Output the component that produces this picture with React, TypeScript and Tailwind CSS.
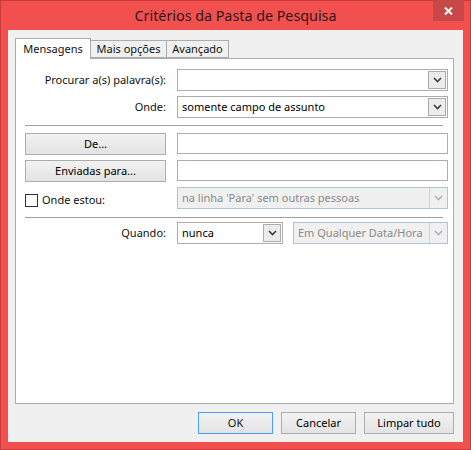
import React from "react";

const font = { fontFamily: '"Noto Sans", "Open Sans", sans-serif' };

const Chevron = ({ light }: { light?: boolean }) => (
  <svg width="9" height="6" viewBox="0 0 9 6">
    <path
      d="M1 1 L4.5 4.5 L8 1"
      fill="none"
      stroke={light ? "#a9b3bd" : "#3c3c3c"}
      strokeWidth="1.6"
    />
  </svg>
);

type ComboProps = { value?: string; disabled?: boolean; className?: string };

const Combo = ({ value = "", disabled, className = "" }: ComboProps) =>
  disabled ? (
    <div
      className={`flex h-[22px] border border-[#b3c3d4] bg-[#f0f0f0] ${className}`}
    >
      <span className="flex-1 truncate pl-[4px] leading-[20px] text-[#8a8a8a]">{value}</span>
      <span className="flex w-[18px] items-center justify-center border-l border-[#c8d3de]">
        <Chevron light />
      </span>
    </div>
  ) : (
    <div className={`flex h-[22px] border border-[#abadb3] bg-white ${className}`}>
      <span className="flex-1 truncate pl-[4px] leading-[20px] text-black">{value}</span>
      <span className="my-[1px] mr-[1px] flex w-[18px] items-center justify-center border border-[#acacac] bg-[#ececec]">
        <Chevron />
      </span>
    </div>
  );

const TextField = () => <div className="h-[21px] border border-[#abadb3] bg-white" />;

const PushButton = ({ label, className = "" }: { label: string; className?: string }) => (
  <div
    className={`flex h-[22px] items-center justify-center border border-[#adadad] bg-gradient-to-b from-[#f2f2f2] to-[#e3e3e3] text-black ${className}`}
  >
    {label}
  </div>
);

const Separator = () => <div className="mr-[5px] h-[2px] border-t border-[#a0a0a0] border-b-white" />;

const Row = ({ left, right }: { left: React.ReactNode; right: React.ReactNode }) => (
  <div className="grid grid-cols-[141px_271px] gap-x-[11px]">
    <div className="flex items-center justify-end">{left}</div>
    <div>{right}</div>
  </div>
);

export default function App() {
  return (
    <div
      className="flex h-[450px] w-[471px] flex-col border border-[#c93c3c] bg-[#f24f4f] text-[11px] text-[#111]"
      style={font}
    >
      {/* title bar */}
      <div className="relative flex h-[29px] items-center justify-center">
        <span className="text-[14.3px] text-[#2b1a1a]">Critérios da Pasta de Pesquisa</span>
        <div className="absolute right-[6px] top-[-1px] flex h-[21px] w-[31px] items-center justify-center bg-[#c74848]">
          <svg width="9" height="8" viewBox="0 0 9 8">
            <path d="M1 0.5 L8 7.5 M8 0.5 L1 7.5" stroke="white" strokeWidth="2" />
          </svg>
        </div>
      </div>

      {/* client area */}
      <div className="mx-[7px] mb-[7px] flex flex-1 flex-col bg-[#f0f0f0] pl-[7px] pr-[9px] pt-[8px]">
        <div className="flex items-end">
          <div className="relative z-10 -mb-px flex h-[21px] w-[76px] items-center justify-center border border-b-0 border-[#acacac] bg-white">
            Mensagens
          </div>
          <div className="flex h-[18px] w-[76px] items-center justify-center border border-l-0 border-[#acacac] bg-[#f0f0f0]">
            Mais opções
          </div>
          <div className="flex h-[18px] w-[62px] items-center justify-center border border-l-0 border-[#acacac] bg-[#f0f0f0]">
            Avançado
          </div>
        </div>

        {/* tab panel */}
        <div className="flex h-[346px] flex-col border border-[#acacac] bg-white pl-[9px] pr-[5px] pt-[10px]">
          <div className="flex flex-col gap-[5px]">
            <Row left={<span>Procurar a(s) palavra(s):</span>} right={<Combo />} />
            <Row left={<span>Onde:</span>} right={<Combo value="somente campo de assunto" />} />
          </div>

          <div className="mb-[6px] mt-[7px]">
            <Separator />
          </div>

          <div className="flex flex-col gap-[5px]">
            <Row left={<PushButton label="De..." className="w-full" />} right={<TextField />} />
            <Row left={<PushButton label="Enviadas para..." className="w-full" />} right={<TextField />} />
            <div className="grid grid-cols-[141px_271px] gap-x-[11px]">
              <div className="flex items-center gap-[4px] pt-[4px]">
                <span className="h-[13px] w-[13px] border border-[#333] bg-white" />
                <span>Onde estou:</span>
              </div>
              <Combo disabled value="na linha 'Para' sem outras pessoas" />
            </div>
          </div>

          <div className="mb-[3px] mt-[8px]">
            <Separator />
          </div>

          <Row
            left={<span>Quando:</span>}
            right={
              <div className="flex gap-[10px]">
                <Combo value="nunca" className="w-[106px]" />
                <Combo disabled value="Em Qualquer Data/Hora" className="w-[155px]" />
              </div>
            }
          />
        </div>

        {/* dialog buttons */}
        <div className="mt-[8px] flex justify-end gap-[8px]">
          <div className="flex h-[22px] w-[75px] items-center justify-center border border-[#4c9ff0] bg-gradient-to-b from-[#f2f2f2] to-[#e3e3e3]">
            OK
          </div>
          <PushButton label="Cancelar" className="w-[75px]" />
          <PushButton label="Limpar tudo" className="w-[90px]" />
        </div>
      </div>
    </div>
  );
}
